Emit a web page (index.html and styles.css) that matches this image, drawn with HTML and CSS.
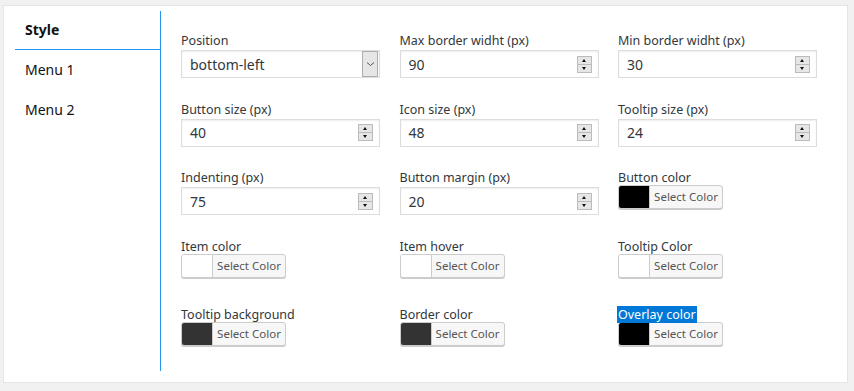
FILE: index.html
```html
<!DOCTYPE html>
<html lang="en">
<head>
  <meta charset="UTF-8">
  <meta name="viewport" content="width=device-width, initial-scale=1.0">
  <title>Floating menu - Settings</title>
  <link rel="stylesheet" href="styles.css">
</head>
<body>
  <div class="panel">
    <ul class="tabs">
      <li class="tab active">Style</li>
      <li class="tab">Menu 1</li>
      <li class="tab">Menu 2</li>
    </ul>

    <div class="fields">
      <div class="field">
        <label>Position</label>
        <div class="box select">
          <span class="value">bottom-left</span>
          <span class="arrow"><svg width="9" height="6" viewBox="0 0 9 6"><path d="M1 1.5l3.5 3 3.5-3" fill="none" stroke="#555" stroke-width="1"/></svg></span>
        </div>
      </div>
      <div class="field">
        <label>Max border widht (px)</label>
        <div class="box"><span class="value">90</span><span class="spin"><i class="up"></i><i class="down"></i></span></div>
      </div>
      <div class="field">
        <label>Min border widht (px)</label>
        <div class="box"><span class="value">30</span><span class="spin"><i class="up"></i><i class="down"></i></span></div>
      </div>

      <div class="field">
        <label>Button size (px)</label>
        <div class="box"><span class="value">40</span><span class="spin"><i class="up"></i><i class="down"></i></span></div>
      </div>
      <div class="field">
        <label>Icon size (px)</label>
        <div class="box"><span class="value">48</span><span class="spin"><i class="up"></i><i class="down"></i></span></div>
      </div>
      <div class="field">
        <label>Tooltip size (px)</label>
        <div class="box"><span class="value">24</span><span class="spin"><i class="up"></i><i class="down"></i></span></div>
      </div>

      <div class="field">
        <label>Indenting (px)</label>
        <div class="box"><span class="value">75</span><span class="spin"><i class="up"></i><i class="down"></i></span></div>
      </div>
      <div class="field">
        <label>Button margin (px)</label>
        <div class="box"><span class="value">20</span><span class="spin"><i class="up"></i><i class="down"></i></span></div>
      </div>
      <div class="field">
        <label>Button color</label>
        <div class="color"><span class="swatch black"></span><span class="pick">Select Color</span></div>
      </div>

      <div class="field">
        <label>Item color</label>
        <div class="color"><span class="swatch"></span><span class="pick">Select Color</span></div>
      </div>
      <div class="field">
        <label>Item hover</label>
        <div class="color"><span class="swatch"></span><span class="pick">Select Color</span></div>
      </div>
      <div class="field">
        <label>Tooltip Color</label>
        <div class="color"><span class="swatch"></span><span class="pick">Select Color</span></div>
      </div>

      <div class="field">
        <label>Tooltip background</label>
        <div class="color"><span class="swatch dark"></span><span class="pick">Select Color</span></div>
      </div>
      <div class="field">
        <label>Border color</label>
        <div class="color"><span class="swatch dark"></span><span class="pick">Select Color</span></div>
      </div>
      <div class="field">
        <label><span class="selected">Overlay color</span></label>
        <div class="color"><span class="swatch black"></span><span class="pick">Select Color</span></div>
      </div>
    </div>
  </div>
</body>
</html>
```

FILE: styles.css
```css
body { margin: 0; background: #f1f1f1; font-family: "Noto Sans", "Open Sans", sans-serif; font-size: 12.5px; color: #32373c; }
.panel { display: flex; align-items: flex-start; margin: 5px 6px 0 3px; height: 378px; box-sizing: border-box; background: #fff; border: 1px solid #e5e5e5; padding: 5px 0 0 11px; }

.tabs { list-style: none; margin: 0; padding: 0; width: 145px; height: 360px; border-right: 1px solid #2196f3; }
.tab { height: 40px; line-height: 40px; padding-left: 10px; font-size: 14px; color: #111; }
.tab.active { height: 38px; line-height: 38px; font-weight: bold; border-bottom: 1px solid #2196f3; }

.fields { display: grid; grid-template-columns: repeat(3, 199px); grid-auto-rows: 47px; column-gap: 19.5px; row-gap: 21.5px; padding: 21px 0 0 20px; }
.field label { display: block; height: 18px; line-height: 18px; margin-bottom: 0; color: #32373c; }
.selected { background: #0078d7; color: #fff; padding: 0 1px; margin-left: -1px; }

.box { display: flex; align-items: center; height: 28px; box-sizing: border-box; border: 1px solid #ddd; box-shadow: inset 0 1px 2px rgba(0,0,0,0.07); background: #fff; }
.box .value { flex: 1; padding-left: 8px; font-size: 14px; color: #32373c; }
.select .arrow { display: flex; align-items: center; justify-content: center; width: 16px; height: 26px; margin-right: 1px; background: #e6e6e6; border: 1px solid #adadad; box-sizing: border-box; }

.spin { display: flex; flex-direction: column; width: 13px; margin-right: 6px; border: 1px solid #bbb; background: #e6e6e6; }
.spin i { position: relative; height: 7px; display: block; }
.spin i.up { border-bottom: 1px solid #bbb; }
.spin i::after { content: ""; position: absolute; left: 4px; border-left: 2.5px solid transparent; border-right: 2.5px solid transparent; }
.spin i.up::after { top: 2px; border-bottom: 3px solid #111; }
.spin i.down::after { top: 2px; border-top: 3px solid #111; }

.color { display: flex; width: 105px; height: 24px; margin-top: -2px; box-sizing: border-box; border: 1px solid #ccc; border-radius: 3px; background: #f7f7f7; box-shadow: 0 1px 0 #ccc; overflow: hidden; }
.swatch { width: 30px; background: #fff; border-right: 1px solid #ccc; }
.swatch.black { background: #000; }
.swatch.dark { background: #333; }
.pick { flex: 1; text-align: center; line-height: 22px; font-size: 11.5px; color: #555; }
```
